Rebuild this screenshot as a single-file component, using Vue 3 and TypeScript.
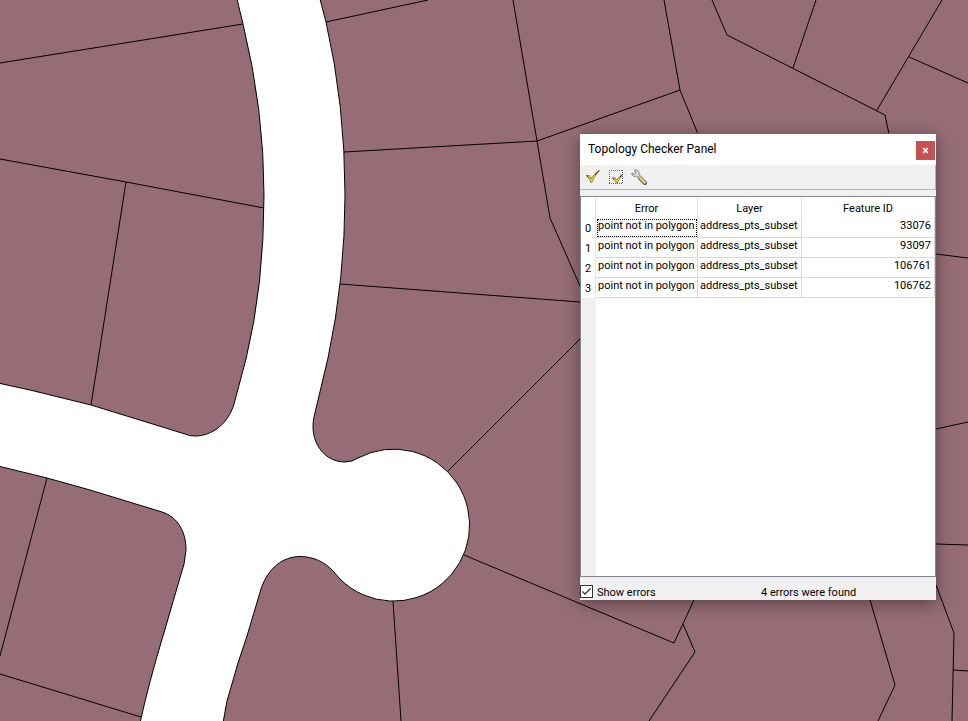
<script setup lang="ts">
import { ref } from 'vue'

interface TopologyError {
  error: string
  layer: string
  featureId: number
}

const showErrors = ref(true)
const selected = ref(0)

const errors: TopologyError[] = [
  { error: 'point not in polygon', layer: 'address_pts_subset', featureId: 33076 },
  { error: 'point not in polygon', layer: 'address_pts_subset', featureId: 93097 },
  { error: 'point not in polygon', layer: 'address_pts_subset', featureId: 106761 },
  { error: 'point not in polygon', layer: 'address_pts_subset', featureId: 106762 },
]

const parcelLines: string[] = [
  '0,63 243,24',
  '0,159 126,182 264,208',
  '126,182 91,405',
  '326,22 428,0',
  '513,0 537,141 550,218 580,286',
  '344,152 537,141 680,90',
  '664,0 680,90 698,134',
  '340,284 580,302',
  '448,471 580,339',
  '712,0 727,35 885,115 889,134',
  '816,0 793,68',
  '942,0 877,110',
  '909,57 968,83',
  '936,254 968,258',
  '936,429 968,422',
  '936,544 968,545',
  '464,555 674,643 694,600',
  '683,624 695,652 649,721',
  '393,601 401,721',
  '870,600 895,685 878,721',
  '936,585 954,633 952,721',
  '953,670 968,671',
  '47,478 0,656',
  '0,674 141,717',
]
</script>

<template>
  <main class="workspace">
    <svg class="map" viewBox="0 0 968 721" preserveAspectRatio="xMinYMin slice" aria-hidden="true">
      <polyline v-for="(points, i) in parcelLines" :key="i" class="parcel" :points="points" />
      <path
        class="road"
        d="M237 -1 L243 24 Q264 110 264 195 Q264 285 246 359 L234 404 C228 424 212 436 195 436 Q189 436 185 434 L91 405 L30 390 L-2 383
           V466 L47 478 L90 490 L162 512 C178 517 186 532 186 550 L184 564 L163 636 Q149 682 140 723
           H223 L227 701 L238 663 L247 636 L261 589 C268 568 283 556.5 300 556.5 C313 556.5 325 562 333 571 L340 579
           A76 76 0 1 0 358 458 Q352 462 345 462 C323 462 309 440 314 417 L328 358 Q345 278 345 195 Q345 105 326 22 L320 -1 Z"
      />
    </svg>

    <section class="panel" aria-labelledby="panel-title">
      <header class="titlebar">
        <h1 id="panel-title" class="title">Topology Checker Panel</h1>
        <button class="close" type="button" aria-label="Close">
          <svg width="7" height="7" viewBox="0 0 7 7"><path d="M1.2 1 L5.8 6 M5.8 1 L1.2 6" /></svg>
        </button>
      </header>

      <div class="toolbar">
        <button class="tool" type="button" aria-label="Validate all">
          <svg width="16" height="16" viewBox="0 0 16 16">
            <path class="tick" d="M2 6.5 L4.5 6.5 L6.2 10 C8 6.5 10.5 3.5 14 1.5 C11 5.5 8.5 9 6.5 14 Z" />
            <path class="tip" d="M1.5 6 L3 8.5 M10 6 L14.5 1.5" />
          </svg>
        </button>
        <button class="tool" type="button" aria-label="Validate extent">
          <svg width="16" height="16" viewBox="0 0 16 16">
            <path class="extent" d="M1 1.5 H15 M1 14.5 H15 M1.5 1 V15 M14.5 1 V15" />
            <path class="tick" d="M5 9 L7.2 9 L8.7 11.2 C10.5 8.5 12 7 14.5 5.5 C12.5 8.5 10.5 11 9 14.5 Z" />
            <path class="tip" d="M4.5 8.5 L6 10.5 M12 8 L15 5" />
          </svg>
        </button>
        <button class="tool" type="button" aria-label="Configure">
          <svg width="16" height="16" viewBox="0 0 16 16">
            <path class="wrench" d="M1 4 L3.5 5.5 L5 4 L3.5 1.2 C6.5 .2 8.8 2.5 7.6 5 L9.5 7.2 L7.5 9 L5.6 7.2 C3 8.2 .5 6.5 1 4 Z" />
            <path class="handle-edge" d="M9 9 L14 14" />
            <path class="handle" d="M8.7 8.5 L13.7 13.5" />
          </svg>
        </button>
      </div>

      <div class="results">
        <table class="grid">
          <colgroup>
            <col class="col-index" />
            <col class="col-error" />
            <col class="col-layer" />
            <col />
          </colgroup>
          <thead>
            <tr>
              <th scope="col" aria-label="Row"></th>
              <th scope="col">Error</th>
              <th scope="col">Layer</th>
              <th scope="col">Feature ID</th>
            </tr>
          </thead>
          <tbody>
            <tr v-for="(row, i) in errors" :key="row.featureId" @click="selected = i">
              <th scope="row">{{ i }}</th>
              <td :class="{ focused: selected === i }">{{ row.error }}</td>
              <td>{{ row.layer }}</td>
              <td class="number">{{ row.featureId }}</td>
            </tr>
          </tbody>
        </table>
        <div class="gutter"></div>
      </div>

      <footer class="statusbar">
        <label class="toggle" for="show-errors">
          <input id="show-errors" v-model="showErrors" class="box" type="checkbox" />
          <svg class="mark" width="13" height="13" viewBox="0 0 13 13" aria-hidden="true">
            <path v-if="showErrors" d="M2.5 6.5 L5 9 L10.5 3.5" />
          </svg>
          <span>Show errors</span>
        </label>
        <output class="count">{{ errors.length }} errors were found</output>
      </footer>
    </section>
  </main>
</template>

<style>
body {
  margin: 0;
}
</style>

<style scoped>
.workspace {
  position: relative;
  height: 100vh;
  overflow: hidden;
  background: #966d76;
  color: #000;
  font-family: Roboto, Tahoma, sans-serif;
  font-size: 11px;
}

.map {
  display: block;
  width: 100%;
  height: 100%;
}

.parcel {
  fill: none;
  stroke: #000;
}

.road {
  fill: #fff;
  stroke: #000;
}

.panel {
  position: absolute;
  top: 133px;
  left: 580px;
  display: flex;
  flex-direction: column;
  box-sizing: border-box;
  width: 356px;
  height: 467px;
  border-top: 1px solid #2b8f52;
  background: #f0f0f0;
  box-shadow: 0 4px 16px rgba(0, 0, 0, 0.4);
}

.titlebar {
  display: flex;
  align-items: center;
  justify-content: space-between;
  height: 31px;
  padding: 0 1px 0 8px;
  background: #fff;
}

.title {
  margin: 0;
  padding-bottom: 2px;
  font-size: 12px;
  font-weight: 400;
  line-height: 16px;
}

.close {
  display: flex;
  align-items: center;
  justify-content: center;
  width: 19px;
  height: 19px;
  margin-top: 2px;
  padding: 0;
  border: 0;
  background: #c75050;
}

.close path {
  fill: none;
  stroke: #fff;
  stroke-width: 1.7;
}

.toolbar {
  display: flex;
  align-items: center;
  gap: 7px;
  box-sizing: border-box;
  height: 25px;
  padding-left: 5px;
  border-right: 1px solid #b4b4b4;
  border-bottom: 1px solid #b4b4b4;
}

.tool {
  display: flex;
  padding: 0;
  border: 0;
  background: none;
}

.tick {
  fill: #f5dc2e;
  stroke: #7a7030;
  stroke-width: 0.8;
  stroke-linejoin: round;
}

.tip {
  fill: none;
  stroke: #333;
}

.extent {
  fill: none;
  stroke: #666;
  stroke-dasharray: 1 1;
}

.wrench {
  fill: #e4e4e4;
  stroke: #777;
}

.handle-edge {
  stroke: #55503c;
  stroke-width: 4;
  stroke-linecap: round;
}

.handle {
  stroke: #e3cd7a;
  stroke-width: 2.5;
  stroke-linecap: round;
}

.results {
  display: flex;
  flex: 1;
  flex-direction: column;
  margin-top: 6px;
  border: 1px solid #828790;
  background: #fff;
}

.grid {
  width: 100%;
  border-spacing: 0;
  table-layout: fixed;
}

.col-index {
  width: 15px;
}

.col-error {
  width: 102px;
}

.col-layer {
  width: 104px;
}

.grid th,
.grid td {
  box-sizing: border-box;
  height: 20px;
  padding: 0 2px;
  border-right: 1px solid #d8d8d8;
  font-weight: 400;
  line-height: 14px;
  white-space: nowrap;
}

.grid thead th {
  height: 21px;
  padding-top: 2px;
  border-color: #e5e5e5;
}

.grid tbody th {
  padding: 2px 0 0;
  border-color: #e5e5e5;
}

.grid tbody td {
  padding-bottom: 3px;
  border-bottom: 1px solid #d8d8d8;
}

.grid td.focused {
  outline: 1px dotted #000;
  outline-offset: -2px;
}

.grid td.number {
  padding-right: 3px;
  text-align: right;
}

.gutter {
  flex: 1;
  width: 15px;
  background: #f0f0f0;
}

.statusbar {
  display: grid;
  grid-template-columns: 1fr 1fr;
  align-items: start;
  height: 23px;
  line-height: 15px;
}

.toggle {
  position: relative;
  display: flex;
  align-items: flex-start;
  gap: 4px;
  padding-top: 8px;
}

.box {
  appearance: none;
  box-sizing: border-box;
  width: 13px;
  height: 13px;
  margin: 0;
  border: 1px solid #333;
  background: #fff;
}

.mark {
  position: absolute;
  top: 8px;
  left: 0;
  pointer-events: none;
}

.mark path {
  fill: none;
  stroke: #333;
  stroke-width: 1.3;
}

.count {
  padding-top: 8px;
  padding-left: 3px;
}
</style>
